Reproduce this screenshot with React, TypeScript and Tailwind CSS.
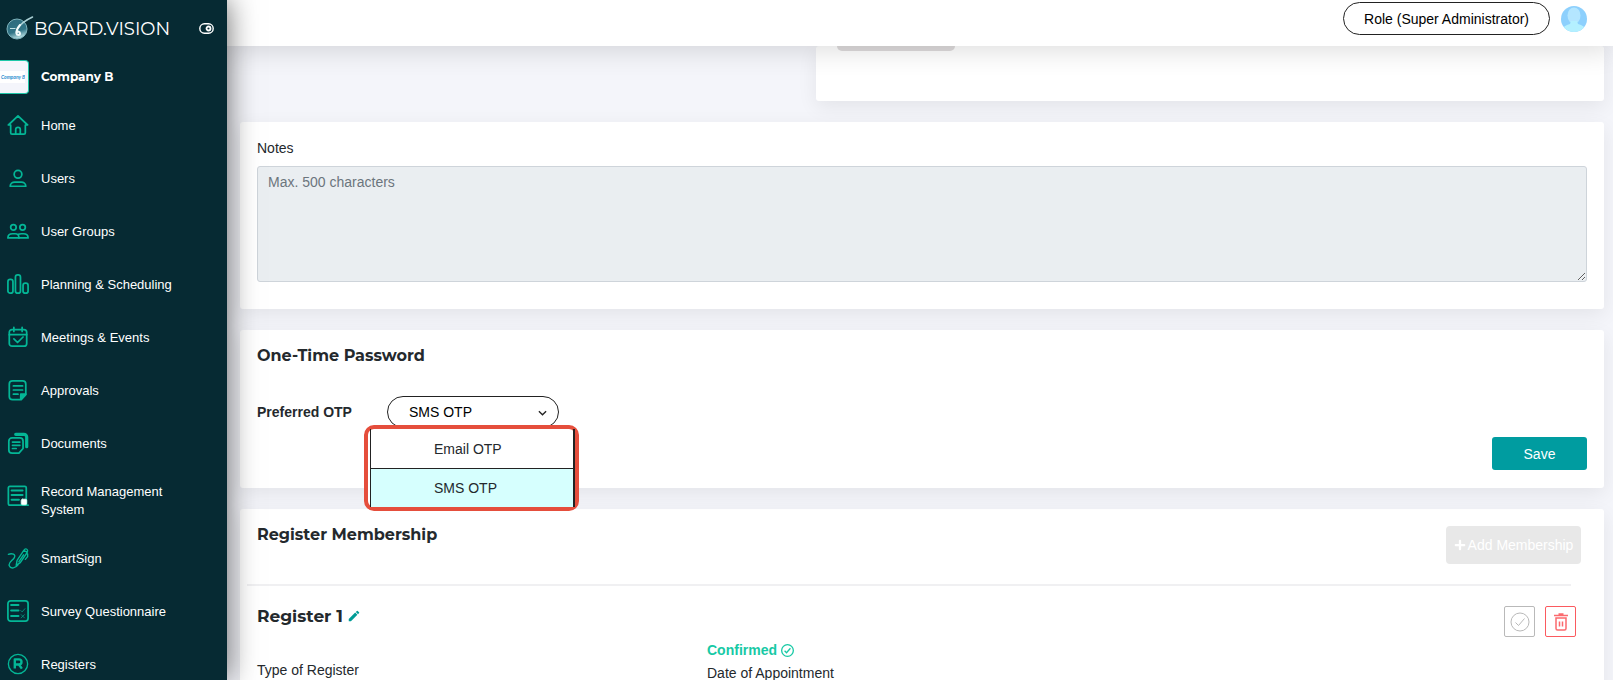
import { useState } from 'react';
import { FaPlus } from 'react-icons/fa';
import { MdEdit } from 'react-icons/md';

const iconPaths: Record<string, React.ReactNode> = {
  home: (
    <>
      <path d="M1.500 12 12 2l10.500 10H20v8.500a1.500 1.500 0 0 1-1.500 1.500h-13A1.500 1.500 0 0 1 4 20.500V12z" />
      <path d="M9.500 22v-5a2.500 2.500 0 0 1 5 0v5" />
    </>
  ),
  users: (
    <>
      <circle cx="12" cy="8" r="4.200" />
      <path d="M3.500 21c0-3 2.500-4.500 5-4.500h7c2.500 0 5 1.500 5 4.500z" />
    </>
  ),
  groups: (
    <>
      <circle cx="7" cy="8" r="3" />
      <circle cx="17" cy="8" r="3" />
      <path d="M1 19.500c0-3 2-4.500 5-4.500h3c2.500 0 4 1.500 4 4.500z" />
      <path d="M12.500 15.500c1-.5 2-.5 3-.5H18c3 0 5 1.500 5 4.500H13" />
    </>
  ),
  planning: (
    <>
      <rect x="1" y="7" width="5.500" height="15" rx="2.500" />
      <rect x="9.200" y="2" width="5.500" height="20" rx="2.500" />
      <rect x="17.500" y="11" width="5.500" height="11" rx="2.500" />
    </>
  ),
  meetings: (
    <>
      <rect x="2.500" y="4" width="19" height="18" rx="3" />
      <path d="M2.500 9.500h19M7.500 1.500V6M16.500 1.500V6M7.500 14l4 4 6-6" />
    </>
  ),
  approvals: (
    <>
      <path d="M6 2h11a3.500 3.500 0 0 1 3.500 3.500V17L15.500 22.500H6A3.500 3.500 0 0 1 2.500 19V5.500A3.500 3.500 0 0 1 6 2z" />
      <path d="M7 7.500h10M7 12h10M7 16.500h5" />
      <path d="M15 22v-5.500h5.500z" fill="currentColor" />
    </>
  ),
  documents: (
    <>
      <path d="M5.500 6.500H14A3.500 3.500 0 0 1 17.500 10v8l-4.500 5H5.500A3.500 3.500 0 0 1 2 19.500V10a3.500 3.500 0 0 1 3.500-3.500z" />
      <path d="M6 11h8M6 14.500h8M6 18h4" />
      <path d="M9.500 2.500h9A3 3 0 0 1 21.500 5.500V16" strokeWidth="3.500" />
    </>
  ),
  records: (
    <>
      <rect x="1.500" y="1.500" width="19.500" height="20.500" rx="1.500" />
      <path d="M5 6h12M5 11h12M5 16h8" strokeWidth="2.200" />
      <path d="M15 22h8" />
      <rect x="15.500" y="15.500" width="6" height="6" rx="1.500" fill="#fff" stroke="#d8fff5" strokeWidth="1" />
    </>
  ),
  sign: (
    <>
      <path d="M1.500 8c4-1.500 8.500 0 6.500 3.500S1 16.500 2.500 20.500s7 2.500 9.500-1" strokeWidth="1.500" />
      <path d="M10 20l1-5.500L18.500 3.500l3.500 2.500L14.500 17zM18.500 3.500c1-2 3.500-2 4 .5L22 6M22.500 7.500v3l-2.500 3M13 16l5-7.500" strokeWidth="1.500" />
    </>
  ),
  survey: (
    <>
      <rect x="1" y="1" width="22" height="22" rx="3" />
      <path d="M4.500 5.500h8M4.500 11.500h8M4.500 17.500h8" strokeWidth="2.200" />
      <path d="M15 11.500l1.500 1.500 3-3.500M15.500 16l3.500 3.500M19 16l-3.500 3.500" strokeWidth="1" opacity="0.7" />
    </>
  ),
  registers: (
    <>
      <circle cx="12" cy="12" r="10.500" strokeWidth="1.500" />
      <path d="M8.500 17V7h4.500a2.800 2.800 0 0 1 0 5.600H8.500M13 12.600l3.200 4.400" strokeWidth="2.600" strokeLinecap="butt" />
    </>
  ),
};

const navItems = [
  { icon: 'home', label: 'Home' },
  { icon: 'users', label: 'Users' },
  { icon: 'groups', label: 'User Groups' },
  { icon: 'planning', label: 'Planning & Scheduling' },
  { icon: 'meetings', label: 'Meetings & Events' },
  { icon: 'approvals', label: 'Approvals' },
  { icon: 'documents', label: 'Documents' },
  { icon: 'records', label: 'Record Management System' },
  { icon: 'sign', label: 'SmartSign' },
  { icon: 'survey', label: 'Survey Questionnaire' },
  { icon: 'registers', label: 'Registers' },
];

const otpOptions = ['Email OTP', 'SMS OTP'];

function NavIcon({ name }: { name: string }) {
  return (
    <svg viewBox="0 0 24 24" className="self-start mt-[2px] w-[22px] h-[22px] shrink-0 text-[#04b696]" fill="none" stroke="currentColor"
      strokeWidth="1.900" strokeLinecap="round" strokeLinejoin="round" aria-hidden="true">
      {iconPaths[name]}
    </svg>
  );
}

function CheckCircle({ className }: { className: string }) {
  return (
    <svg viewBox="0 0 20 20" className={className} fill="none" stroke="currentColor" aria-hidden="true">
      <circle cx="10" cy="10" r="9" />
      <path d="M5.500 10.500l3 3 6-7" />
    </svg>
  );
}

function Sidebar() {
  return (
    <aside className="relative z-20 w-[227px] shrink-0 bg-[#062a33] text-white shadow-[0_0_28px_rgba(0,0,0,0.6)]">
      <div className="flex items-center h-14 pl-[6px] pr-[13px]">
        <svg viewBox="0 0 28 24" className="w-7 h-6 shrink-0" aria-hidden="true">
          <defs>
            <linearGradient id="globe" x1="0" y1="0" x2="0.300" y2="1">
              <stop offset="0" stopColor="#2c6a7c" />
              <stop offset="0.700" stopColor="#317587" />
              <stop offset="1" stopColor="#a9d3d8" />
            </linearGradient>
          </defs>
          <circle cx="11" cy="13" r="10" fill="url(#globe)" stroke="#7fb4bd" strokeWidth="1" />
          <path d="M26.500 1C19 4.500 14 8 11.500 13" fill="none" stroke="#a9cfd4" strokeWidth="1.600" strokeLinecap="round" />
          <path d="M14 9c-2.500 3-4 6-3.500 8.500.4 2 3.500 2 3.500 0s-2-2.500-3.200-1" fill="none" stroke="#f2fbfb" strokeWidth="2" strokeLinecap="round" />
          <path d="M4 12.500h5.500" stroke="#bfe0e4" strokeWidth="1" />
        </svg>
        <span className="pt-px font-['Montserrat','Inter',sans-serif] text-[18px] leading-6">BOARD.VISION</span>
        <button type="button" aria-label="Toggle sidebar" className="ml-auto">
          <svg viewBox="0 0 15 11" className="w-[15px] h-[11px]" fill="none" stroke="#fff" aria-hidden="true">
            <rect x="0.800" y="0.800" width="13.400" height="9.400" rx="4.700" strokeWidth="1.400" />
            <circle cx="9.500" cy="5.500" r="2" strokeWidth="1.800" />
          </svg>
        </button>
      </div>

      <div className="flex items-center h-[42px]">
        <div className="flex items-center w-[29px] h-[34px] bg-[#f4f5fb] border border-l-0 border-[#1fc8a9] rounded-r-sm">
          <svg viewBox="0 0 25 12" className="w-[25px] h-3" aria-hidden="true">
            <rect width="25" height="12" fill="#fff" />
            <text x="1" y="8" fontSize="5" fontStyle="italic" fontWeight="700" fill="#2f8fd0" fontFamily="Lato, sans-serif">Company B</text>
          </svg>
        </div>
        <span className="ml-3 font-['Montserrat','Inter',sans-serif] font-bold text-xs leading-5">Company B</span>
      </div>

      <nav className="pt-px">
        {navItems.map(item => (
          <a key={item.label} href="#" className="flex items-center min-h-[53px] py-[13px] pl-[7px] pr-8 text-[13px] leading-[18px] hover:bg-white/5">
            <NavIcon name={item.icon} />
            <span className="ml-3">{item.label}</span>
          </a>
        ))}
      </nav>
    </aside>
  );
}

function Header() {
  return (
    <header className="relative z-10 flex items-start justify-end shrink-0 h-[46px] pt-[2px] pr-[26px] bg-white shadow-[0_4px_28px_rgba(0,0,0,0.14)]">
      <button type="button" className="h-[33px] px-5 border border-[#222] rounded-full text-black">
        Role (Super Administrator)
      </button>
      <button type="button" aria-label="Account" className="mt-1 ml-[11px]">
        <svg viewBox="0 0 26 26" className="w-[26px] h-[26px]" aria-hidden="true">
          <clipPath id="face"><circle cx="13" cy="13" r="13" /></clipPath>
          <g clipPath="url(#face)">
            <rect width="26" height="26" fill="#8dd0fd" />
            <ellipse cx="13" cy="9.500" rx="6.500" ry="8" fill="#b4e6ff" />
            <path d="M1 26c0-5 4-7 8-8l1-3h6l1 3c4 1 8 3 8 8z" fill="#b4f0ff" />
          </g>
        </svg>
      </button>
    </header>
  );
}

const cardClass = 'bg-white rounded-[3px] shadow-[0_6px_20px_rgba(0,0,0,0.07)]';
const headingClass = "font-['Montserrat','Inter',sans-serif] font-bold text-[#24292d]";

export default function App() {
  const [notes, setNotes] = useState('');
  const [otp, setOtp] = useState('SMS OTP');

  return (
    <div className="flex h-screen overflow-hidden bg-[#f4f5fa] font-['Liberation_Sans',Arial,sans-serif] text-sm text-[#24292d]">
      <Sidebar />
      <div className="flex flex-col flex-1 min-w-0">
        <Header />
        <main className="flex flex-col flex-1 gap-[21px] min-h-0 overflow-hidden pl-[13px] pr-[9px]">
          <section className={`${cardClass} shrink-0 self-end w-[57.800%] h-[55px] pl-[21px]`}>
            <div className="w-[118px] h-[5px] bg-[#dedbdc] rounded-b-full" />
          </section>

          <section className={`${cardClass} shrink-0 px-[17px] pt-4 pb-[27px]`}>
            <label htmlFor="notes" className="block leading-5">Notes</label>
            <textarea id="notes" placeholder="Max. 500 characters" value={notes} onChange={e => setNotes(e.target.value)}
              className="block w-full h-[116px] mt-2 px-[10px] py-[5px] leading-5 bg-[#eaeef1] border border-[#ced4da] rounded-[3px] placeholder-[#6c757d] resize-y" />
          </section>

          <section className={`${cardClass} relative z-[1] shrink-0 px-[17px] pt-[14px] pb-[18px]`}>
            <h2 className={`${headingClass} text-base`}>One-Time Password</h2>
            <div className="flex items-center mt-7">
              <label htmlFor="otp" className="w-[130px] font-bold">Preferred OTP</label>
              <div className="relative w-[172px]">
                <select id="otp" value={otp} onChange={e => setOtp(e.target.value)}
                  className="block w-full h-8 pl-[21px] pr-8 bg-white border border-[#222] rounded-full text-black appearance-none">
                  {otpOptions.map(o => <option key={o}>{o}</option>)}
                </select>
                <svg viewBox="0 0 10 6" className="absolute right-[12px] top-[14px] w-[9px] h-[6px]" fill="none" stroke="#222" strokeWidth="1.500" aria-hidden="true">
                  <path d="M1 1l4 4 4-4" />
                </svg>
                <div className="absolute top-[29px] -left-[23px] w-[215px] h-[86px] pl-[2px] bg-white border-4 border-[#e54e3c] rounded-[10px]">
                  <ul role="listbox" aria-label="Preferred OTP" className="h-full border-l border-r-2 border-[#222]">
                    {otpOptions.map(o => (
                      <li key={o} role="option" aria-selected={o === otp} onClick={() => setOtp(o)}
                        className="flex items-center h-10 pl-[63px] border-b border-[#222] cursor-pointer last:h-[38px] last:border-b-0 aria-selected:bg-[#d6fffe]">
                        {o}
                      </li>
                    ))}
                  </ul>
                </div>
              </div>
            </div>
            <div className="flex justify-end mt-[9px]">
              <button type="button" className="w-[95px] h-[33px] bg-[#009ca0] rounded-[3px] text-white">Save</button>
            </div>
          </section>

          <section className={`${cardClass} shrink-0 pt-[14px] pb-6`}>
            <div className="flex items-start justify-between pl-[17px] pr-[23px]">
              <h2 className={`${headingClass} text-base`}>Register Membership</h2>
              <button type="button" disabled className="flex items-center justify-center gap-[2px] w-[135px] h-[38px] mt-[3px] bg-[#e8e8e8] rounded text-white">
                <FaPlus className="w-3 h-3" />Add Membership
              </button>
            </div>
            <hr className="ml-[7px] mr-[33px] mt-5 border-t-2 border-[#f0f0f2]" />
            <div className="flex items-start justify-between pl-[17px] pr-7 pt-5">
              <h3 className={`${headingClass} flex items-center text-[17px] leading-5`}>
                Register 1
                <button type="button" aria-label="Edit register" className="ml-1 text-[#009c96]"><MdEdit className="w-[14px] h-[14px]" /></button>
              </h3>
              <div className="flex gap-[10px]">
                <button type="button" aria-label="Confirm" className="flex items-center justify-center w-[31px] h-[31px] border border-[#b9b9b9] rounded-[2px] text-[#b9b9b9]">
                  <CheckCircle className="w-5 h-5" />
                </button>
                <button type="button" aria-label="Delete" className="flex items-center justify-center w-[31px] h-[31px] border border-[#fb5a5f] rounded-[2px] text-[#fb6a6e]">
                  <svg viewBox="0 0 14 18" className="w-[14px] h-[18px]" fill="none" stroke="currentColor" strokeWidth="1.500" aria-hidden="true">
                    <path d="M0 2.500h14M4.500 1h5M2 5h10v10.500a1.500 1.500 0 0 1-1.500 1.500h-7A1.500 1.500 0 0 1 2 15.500zM5.500 8.500v5M8.500 8.500v5" />
                  </svg>
                </button>
              </div>
            </div>
            <div className="grid grid-cols-[450px_1fr] pl-[17px] pt-[2px] leading-[23px]">
              <p className="pt-5">Type of Register</p>
              <div>
                <p className="flex items-center gap-1 font-bold text-[#17c9a5]">Confirmed <CheckCircle className="w-[13px] h-[13px] stroke-2" /></p>
                <p>Date of Appointment</p>
              </div>
            </div>
          </section>
        </main>
      </div>
    </div>
  );
}
